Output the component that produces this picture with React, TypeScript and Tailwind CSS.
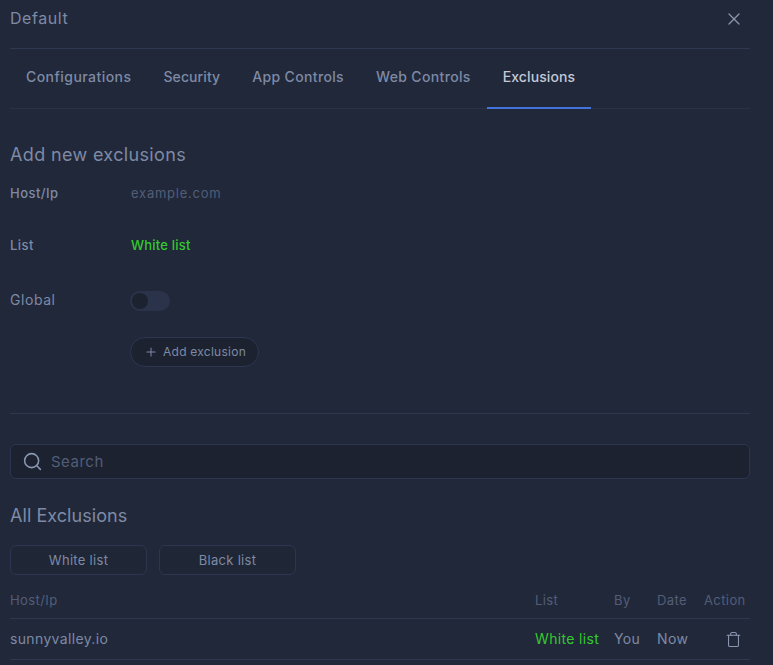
import { Plus, Search, Trash, X } from "lucide-react";

const tabs = [
  { label: "Configurations", tracking: "tracking-[0.45px]" },
  { label: "Security", tracking: "tracking-[0.1px]" },
  { label: "App Controls", tracking: "tracking-[0.35px]" },
  { label: "Web Controls", tracking: "tracking-[0.35px]" },
  { label: "Exclusions", tracking: "tracking-[0.1px]" },
];

const FormRow = ({ label, className, children }: { label: string; className: string; children: React.ReactNode }) => (
  <div className={`flex items-center ${className}`}>
    <span className="w-[121px] text-[13px] font-medium tracking-[0.45px] text-[#7e8aa5]">{label}</span>
    {children}
  </div>
);

const App = () => {
  return (
    <div className="h-[665px] w-[773px] overflow-hidden bg-[#21283a] pl-[10px] pr-[23px] font-['Inter',sans-serif] text-[#7e8aa5]">
      {/* header */}
      <div className="flex h-[49px] items-start justify-between border-b border-[#2e3950] pt-[8px]">
        <span className="text-[16px] leading-[21px] tracking-[0.55px] text-[#7e8aa5]">Default</span>
        <button className="mr-[6px] mt-[1px] text-[#8b97b0]">
          <X size={20} strokeWidth={1.5} />
        </button>
      </div>

      {/* tabs */}
      <div className="flex h-[60px] border-b border-[#2a3247]">
        {tabs.map((tab) => (
          <div
            key={tab.label}
            className={`flex h-[60px] items-center border-b-2 px-4 pb-[4px] text-[14px] ${tab.tracking} ${
              tab.label === "Exclusions" ? "border-[#4272dc] font-medium text-[#c2c9d8]" : "border-transparent font-medium text-[#7e8aa5]"
            }`}
          >
            {tab.label}
          </div>
        ))}
      </div>

      {/* add new */}
      <h2 className="mt-[34px] text-[18px] leading-[24px] tracking-[0.35px] text-[#7e8aa5]">Add new exclusions</h2>
      <FormRow label="Host/Ip" className="mt-[17px] h-[20px]">
        <span className="text-[13px] tracking-[0.75px] text-[#525e78]">example.com</span>
      </FormRow>
      <FormRow label="List" className="mt-[32px] h-[20px]">
        <span className="text-[13px] font-medium tracking-[0.2px] text-[#35c92f]">White list</span>
      </FormRow>
      <div className="mt-[33px] flex h-[20px] items-center">
        <span className="w-[120px] text-[14px] tracking-[0.55px] text-[#7e8aa5]">Global</span>
        <div className="mt-[3px] flex h-[20px] w-[40px] items-center rounded-full bg-[#2a3349] pl-[2px]">
          <div className="h-[16px] w-[16px] rounded-full bg-[#1c2230]" />
        </div>
      </div>
      <div className="ml-[120px] mt-[28px] flex h-[30px] w-[129px] items-center gap-[5px] rounded-full border border-[#2c3650] bg-[#1c2230] pl-[14px] text-[12px] tracking-[0.25px] text-[#7e8aa5]">
        <Plus size={14} strokeWidth={1.75} className="-ml-[1px]" />
        Add exclusion
      </div>

      <div className="mt-[46px] border-t border-[#2e3950]" />

      {/* search */}
      <div className="mt-[30px] flex h-[35px] items-center gap-[8px] rounded-[6px] border border-[#2c3650] bg-[#1c2230] pl-[11px]">
        <Search size={21} strokeWidth={1.75} className="text-[#8b97b0]" />
        <span className="pt-[1px] text-[15px] tracking-[0.5px] text-[#525e78]">Search</span>
      </div>

      <h2 className="mt-[25px] text-[18px] leading-[24px] tracking-[0.05px] text-[#7e8aa5]">All Exclusions</h2>

      <div className="mt-[17px] flex gap-[12px]">
        <div className="flex h-[30px] w-[137px] items-center justify-center rounded-[6px] border border-[#2c3650] bg-[#1f2636] pt-[1px] text-[13px] tracking-[0.3px] text-[#7e8aa5]">
          White list
        </div>
        <div className="flex h-[30px] w-[137px] items-center justify-center rounded-[6px] border border-[#2c3650] bg-[#1f2636] pt-[1px] text-[13px] tracking-[0.3px] text-[#7e8aa5]">
          Black list
        </div>
      </div>

      {/* table */}
      <div className="flex h-[44px] items-center border-b border-[#2e3950] pt-[8px] text-[13px] tracking-[0.4px] text-[#525e78]">
        <span className="w-[525px]">Host/Ip</span>
        <span className="w-[79px]">List</span>
        <span className="w-[43px]">By</span>
        <span className="w-[47px]">Date</span>
        <span>Action</span>
      </div>
      <div className="flex h-[41px] items-center border-b border-[#2e3950] pb-[2px] text-[14px] tracking-[0.35px] text-[#7e8aa5]">
        <span className="w-[525px]">sunnyvalley.io</span>
        <span className="w-[79px] text-[#35c92f]">White list</span>
        <span className="w-[43px]">You</span>
        <span className="w-[47px]">Now</span>
        <Trash size={17} strokeWidth={1.5} className="ml-[21px] mt-[2px] text-[#8b97b0]" />
      </div>
    </div>
  );
};

export default App;
